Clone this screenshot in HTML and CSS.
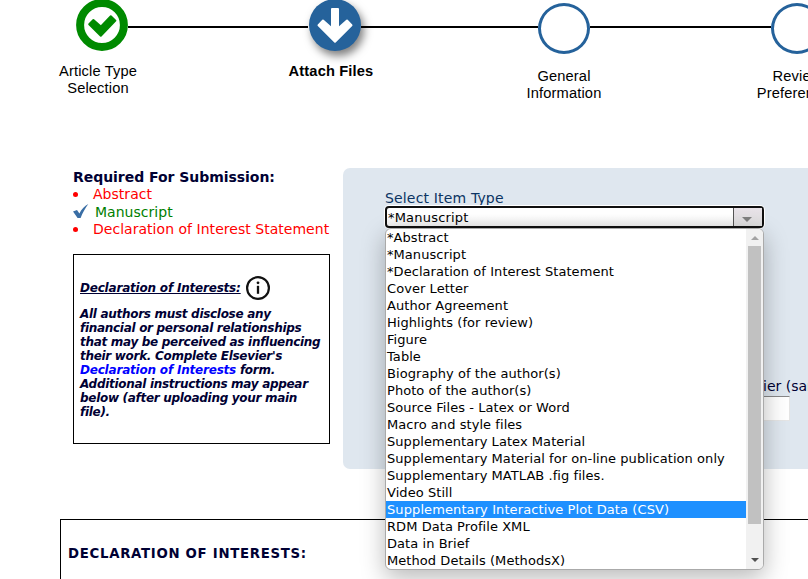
FILE: index.html
```html
<!DOCTYPE html>
<html lang="en">
<head>
<meta charset="utf-8">
<title>Attach Files</title>
<link rel="stylesheet" href="styles.css">
</head>
<body>
<header class="stepper">
  <div class="track">
    <svg class="step-icon done" width="52" height="52" viewBox="0 0 52 52"><circle cx="26" cy="26" r="21.9" fill="#fff" stroke="#008a00" stroke-width="8"/><path d="M13.200 25.200L17.400 21 24.800 27.600 34.800 17.200 39.400 21.600 24.800 36.800z" fill="#008a00" stroke="#008a00" stroke-width="2" stroke-linejoin="round"/></svg>
    <span class="line"></span>
    <svg class="step-icon current" width="52" height="52" viewBox="0 0 52 52"><circle class="disc" cx="26" cy="26" r="26" fill="#25629b"/><path d="M23 10h6v19.500l9-8 4.500 4.700L26 42.800 9.500 26.200l4.500-4.700 9 8z" fill="#fff" stroke="#fff" stroke-width="2" stroke-linejoin="round"/></svg>
    <span class="line line-b"></span>
    <span class="circle"></span>
    <span class="line line-c"></span>
    <span class="circle"></span>
  </div>
  <div class="labels">
    <div>Article Type<br>Selection</div>
    <div class="active">Attach Files</div>
    <div class="pending">General<br>Information</div>
    <div class="pending">Review<br>Preferences</div>
  </div>
</header>
<main class="content">
  <aside class="side">
    <h2>Required For Submission:</h2>
    <ul class="required">
      <li><span class="dot"></span>Abstract</li>
      <li class="ok"><svg width="17" height="16" viewBox="0 0 17 16"><path d="M0 7.500L4 6l2.400 3.500C8.300 5.500 11.500 2 15.300 0 12.200 4 9.500 9 7.600 14H4.600z" fill="#3a6ea5"/></svg>Manuscript</li>
      <li class="last"><span class="dot"></span>Declaration of Interest Statement</li>
    </ul>
    <section class="notice">
      <div class="notice-head"><u>Declaration of Interests:</u><svg width="26" height="26" viewBox="0 0 26 26"><circle cx="13" cy="13" r="10.900" fill="#fff" stroke="#111" stroke-width="2.200"/><path d="M13 10.800v8" stroke="#111" stroke-width="2.300"/><circle cx="13" cy="7.800" r="1.400" fill="#111"/></svg></div>
      <p>All authors must disclose any<br>financial or personal relationships<br>that may be perceived as influencing<br>their work. Complete Elsevier's<br><a>Declaration of Interests</a> form.<br>Additional instructions may appear<br>below (after uploading your main<br>file).</p>
    </section>
  </aside>
  <section class="panel">
    <div class="panel-label">Select Item Type</div>
    <div class="select">
      <span class="value">*Manuscript</span><span class="arrow"></span>
      <div class="popup">
        <ul class="options">
          <li>*Abstract</li>
          <li>*Manuscript</li>
          <li>*Declaration of Interest Statement</li>
          <li>Cover Letter</li>
          <li>Author Agreement</li>
          <li>Highlights (for review)</li>
          <li>Figure</li>
          <li>Table</li>
          <li>Biography of the author(s)</li>
          <li>Photo of the author(s)</li>
          <li>Source Files - Latex or Word</li>
          <li>Macro and style files</li>
          <li>Supplementary Latex Material</li>
          <li>Supplementary Material for on-line publication only</li>
          <li>Supplementary MATLAB .fig files.</li>
          <li>Video Still</li>
          <li class="selected">Supplementary Interactive Plot Data (CSV)</li>
          <li>RDM Data Profile XML</li>
          <li>Data in Brief</li>
          <li>Method Details (MethodsX)</li>
        </ul>
        <div class="scroll"><i class="up"></i><b class="thumb"></b><i class="down"></i></div>
      </div>
    </div>
    <div class="field"><span>ier (same</span><div class="input"></div></div>
  </section>
</main>
<section class="declaration"><h2>DECLARATION OF INTERESTS:</h2></section>
</body>
</html>
```
FILE: styles.css
```css
* { box-sizing: border-box; }
html, body { height: 579px; overflow: hidden; }
body { margin: 0; width: 808px; background: #fff; font: 13px/17px "DejaVu Sans", sans-serif; color: #000033; }
ul, h2, p { margin: 0; padding: 0; list-style: none; }
.stepper { height: 168px; overflow: hidden; color: #000; }
.track { display: flex; align-items: flex-start; width: 823px; padding-left: 76px; height: 63px; }
.step-icon { flex: none; margin-top: -1px; overflow: visible; }
.disc { filter: drop-shadow(3px 5px 4px rgba(0,0,0,.5)); }
.line { flex: none; width: 180px; margin-right: 1px; height: 2px; margin-top: 26px; background: #000; }
.line-b { width: 177px; margin-right: 0; }
.line-c { width: 181px; margin-right: 0; }
.circle { flex: none; width: 52px; height: 51px; margin-top: 3px; border: 3px solid #25629b; border-radius: 50%; }
.labels { display: grid; grid-template-columns: repeat(4, 233px); width: 932px; margin-left: -18.5px; font: 14.67px/17px "Liberation Sans", Arial, sans-serif; letter-spacing: .14px; text-align: center; }
.labels .active { font-weight: bold; }
.labels .pending { padding-top: 5px; }
.content { display: flex; height: 301px; }
.side { width: 257px; margin-left: 73px; flex: none; }
.side h2 { font-size: 14px; line-height: 18px; white-space: nowrap; letter-spacing: -.04px; }
.required { color: #f00; font-size: 14px; line-height: 17px; height: 68px; white-space: nowrap; letter-spacing: .03px; }
.required li { display: flex; align-items: center; height: 17px; }
.required .ok { height: 18px; color: #008000; }
.required svg { margin-right: 5px; }
.dot { width: 5px; height: 5px; border-radius: 50%; background: #f00; margin-right: 15px; }
.notice { border: 1px solid #000; height: 190px; padding: 20px 0 0 6px; font: italic bold 12px/14px "DejaVu Sans", sans-serif; letter-spacing: -.3px; white-space: nowrap; }
.notice-head { display: flex; align-items: center; height: 26px; gap: 4px; letter-spacing: -.2px; }
.notice p { margin-top: 6px; }
.notice a { color: #00f; letter-spacing: -.2px; }
.panel { flex: 1; min-width: 0; margin-left: 13px; padding: 22px 0 0 42px; background: #dfe7ef; border-radius: 7px 0 0 7px; height: 301px; }
.panel-label { color: #0b3463; font-size: 14px; line-height: 16px; letter-spacing: .16px; }
.select { position: relative; width: 379px; height: 22px; border: 2px solid #101010; border-radius: 4px; background: linear-gradient(#fff 40%, #eee); display: flex; color: #000; box-shadow: 0 0 0 1px #fff; }
.value { flex: 1; line-height: 19px; padding-left: 1px; letter-spacing: .2px; }
.arrow { width: 29px; border-left: 1px solid #555; background: linear-gradient(#e8e2e8, #ddd); display: flex; }
.arrow::after { content: ""; border: 5px solid transparent; border-top: 5px solid #808080; border-bottom: 0; margin: 9px 0 0 8px; height: 0; }
.popup { position: absolute; left: -2px; top: 20px; width: 379px; height: 342px; background: #fff; border: 1px solid #aaa; border-radius: 6px; display: flex; overflow: hidden; box-shadow: 0 8px 24px rgba(0,0,0,.28); }
.options { flex: 1; white-space: nowrap; letter-spacing: .06px; }
.options li { height: 17px; line-height: 17px; padding-left: 1px; }
.options .selected { color: #fff; background: #1e90ff; letter-spacing: .1px; }
.scroll { width: 17px; background: #f1f1f1; display: flex; flex-direction: column; align-items: center; }
.up { border: 4px solid transparent; border-bottom-color: #a3a3a3; border-top: 0; margin: 7px 0 6px; }
.thumb { width: 13px; height: 278px; background: #c1c1c1; }
.down { border: 4px solid transparent; border-top-color: #505050; border-bottom: 0; margin-top: 34px; }
.field { margin: 150px 0 0 378px; width: 45px; overflow: hidden; font-size: 14px; line-height: 17px; white-space: nowrap; }
.input { width: 26px; height: 25px; margin: 1px 0 0 1px; background: #fff; border-top: 1px solid #888; border-right: 1px solid #e5e5e5; border-bottom: 1px solid #e5e5e5; }
.declaration { margin: 50px 0 0 60px; height: 80px; border: solid #000; border-width: 1px 0 0 1px; padding: 24px 0 0 7px; }
.declaration h2 { font-size: 13.3px; line-height: 19px; letter-spacing: .7px; }
```
